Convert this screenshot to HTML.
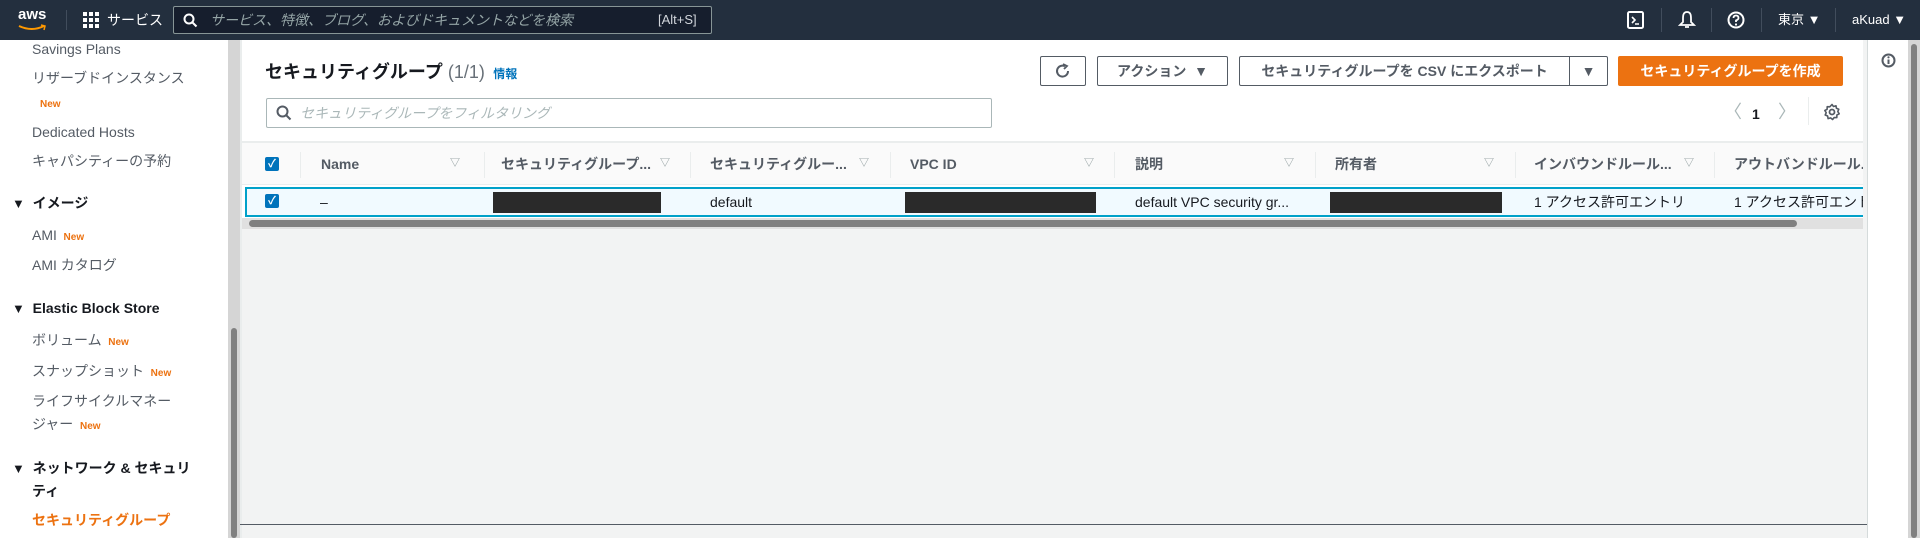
<!DOCTYPE html>
<html><head><meta charset="utf-8"><style>
*{box-sizing:border-box;margin:0;padding:0}
body{width:1920px;height:538px;overflow:hidden;background:#f2f3f3;font-family:"Liberation Sans","Noto Sans CJK JP",sans-serif;font-size:14px;line-height:18px;color:#16191f;position:relative}
.a{position:absolute;white-space:nowrap}
.top{left:0;top:0;width:1920px;height:40px;background:#232f3e}
.side{left:0;top:40px;width:228px;height:498px;background:#fff}
.sg{left:228px;top:40px;width:12px;height:498px;background:#d5d5d5}
.sth{left:231px;top:328px;width:6px;height:210px;background:#808080;border-radius:3px}
.si{color:#545b64;font-size:14px}
.new{color:#ec7211;font-size:10px;font-weight:bold}
.sh{color:#16191f;font-size:14px;font-weight:bold}
.tri{font-size:13px}
.panel{left:242px;top:40px;width:1621px;height:189px;background:#fff}
.btn{border:1px solid #545b64;background:#fff;height:30px;border-radius:2px;font-weight:bold;color:#545b64;font-size:14px;display:flex;align-items:center;justify-content:center}
.th{top:155px;font-weight:bold;color:#545b64;font-size:14px;height:18px;line-height:18px}
.ft{top:156px;color:#879596;font-size:10px;line-height:16px}
.sep{top:152px;width:1px;height:26px;background:#eaeded}
.td{top:193px;font-size:14px;color:#16191f;height:18px;line-height:18px}
.blk{top:192px;height:21px;background:#2a2a2a}
.cb{width:14px;height:14px;background:#0073bb;border-radius:2px;color:#fff;font-size:11px;line-height:14px;text-align:center;font-weight:bold}
</style></head><body>
<div class="a top"></div>
<div class="a" style="left:18px;top:6px;color:#fff;font-weight:bold;font-size:15px">aws</div>
<svg class="a" style="left:17px;top:24px" width="30" height="8"><path d="M2 2 Q15 8 27 2" stroke="#ff9900" stroke-width="2" fill="none"/><path d="M24 1 L28 2 L27 6" stroke="#ff9900" stroke-width="1.5" fill="none"/></svg>
<div class="a" style="left:66px;top:10px;width:1px;height:20px;background:#414d5c"></div>
<svg class="a" style="left:83px;top:12px" width="16" height="16" fill="#fff"><rect x="0" y="0" width="4" height="4"/><rect x="6" y="0" width="4" height="4"/><rect x="12" y="0" width="4" height="4"/><rect x="0" y="6" width="4" height="4"/><rect x="6" y="6" width="4" height="4"/><rect x="12" y="6" width="4" height="4"/><rect x="0" y="12" width="4" height="4"/><rect x="6" y="12" width="4" height="4"/><rect x="12" y="12" width="4" height="4"/></svg>
<div class="a" style="left:107px;top:11px;color:#fff;font-size:14px">サービス</div>
<div class="a" style="left:173px;top:6px;width:539px;height:28px;border:1px solid #879596;background:#161e2d;border-radius:2px"></div>
<svg class="a" style="left:183px;top:13px" width="15" height="15"><circle cx="6" cy="6" r="4.5" stroke="#fff" stroke-width="2" fill="none"/><path d="M9.5 9.5 L13.5 13.5" stroke="#fff" stroke-width="2"/></svg>
<div class="a" style="left:210px;top:11px;color:#95a5a6;font-size:14px;font-style:italic">サービス、特徴、ブログ、およびドキュメントなどを検索</div>
<div class="a" style="left:658px;top:11px;color:#d1d5db;font-size:13px">[Alt+S]</div>
<svg class="a" style="left:1627px;top:11px" width="17" height="18"><rect x="1" y="1" width="15" height="16" rx="1.5" stroke="#fff" stroke-width="2" fill="none"/><path d="M5 6 L8 9 L5 12 M8 13 H12" stroke="#fff" stroke-width="1.6" fill="none"/></svg>
<div class="a" style="left:1661px;top:8px;width:1px;height:24px;background:#414d5c"></div>
<svg class="a" style="left:1678px;top:10px" width="18" height="20"><path d="M9 2 C5 2 5 6 5 9 L5 12 L2 15 H16 L13 12 L13 9 C13 6 13 2 9 2 Z M7 17 H11" stroke="#fff" stroke-width="1.8" fill="none"/></svg>
<div class="a" style="left:1711px;top:8px;width:1px;height:24px;background:#414d5c"></div>
<svg class="a" style="left:1727px;top:11px" width="18" height="18"><circle cx="9" cy="9" r="7.5" stroke="#fff" stroke-width="2" fill="none"/><path d="M6.5 7 Q6.5 4.5 9 4.5 Q11.5 4.5 11.5 7 Q11.5 8.5 9 9.5 V11" stroke="#fff" stroke-width="1.8" fill="none"/><circle cx="9" cy="13.5" r="1.1" fill="#fff"/></svg>
<div class="a" style="left:1761px;top:8px;width:1px;height:24px;background:#414d5c"></div>
<div class="a" style="left:1778px;top:11px;color:#fff;font-size:13px">東京 ▼</div>
<div class="a" style="left:1835px;top:8px;width:1px;height:24px;background:#414d5c"></div>
<div class="a" style="left:1852px;top:11px;color:#fff;font-size:13px">aKuad ▼</div>

<div class="a side"></div>
<div class="a si" style="left:32px;top:40px">Savings Plans</div>
<div class="a si" style="left:32px;top:69px">リザーブドインスタンス</div>
<div class="a new" style="left:40px;top:96px">New</div>
<div class="a si" style="left:32px;top:123px">Dedicated Hosts</div>
<div class="a si" style="left:32px;top:152px">キャパシティーの予約</div>
<div class="a sh" style="left:12px;top:194px"><span class="tri">▼</span>&nbsp; イメージ</div>
<div class="a si" style="left:32px;top:226px">AMI <span class="new">&nbsp;New</span></div>
<div class="a si" style="left:32px;top:256px">AMI カタログ</div>
<div class="a sh" style="left:12px;top:299px"><span class="tri">▼</span>&nbsp; Elastic Block Store</div>
<div class="a si" style="left:32px;top:331px">ボリューム <span class="new">&nbsp;New</span></div>
<div class="a si" style="left:32px;top:362px">スナップショット <span class="new">&nbsp;New</span></div>
<div class="a si" style="left:32px;top:392px">ライフサイクルマネー</div>
<div class="a si" style="left:32px;top:415px">ジャー <span class="new">&nbsp;New</span></div>
<div class="a sh" style="left:12px;top:459px"><span class="tri">▼</span>&nbsp; ネットワーク &amp; セキュリ</div>
<div class="a sh" style="left:32px;top:482px">ティ</div>
<div class="a" style="left:32px;top:511px;color:#ec7211;font-weight:bold;font-size:14px">セキュリティグループ</div>
<div class="a sg"></div><div class="a sth"></div>

<div class="a panel"></div>
<div class="a" style="left:240px;top:40px;width:2px;height:498px;background:#eaeded"></div>
<div class="a" style="left:265px;top:60px;font-size:18px;line-height:24px;font-weight:bold">セキュリティグループ <span style="font-weight:normal;color:#687078">(1/1)</span> <span style="font-size:12px;color:#0073bb;font-weight:bold">&nbsp;情報</span></div>
<div class="a btn" style="left:1040px;top:56px;width:46px"><svg width="16" height="16"><path d="M13 8 A5.5 5.5 0 1 1 10 3.2" stroke="#545b64" stroke-width="2" fill="none"/><path d="M8 1 L12 3 L9 6" stroke="#545b64" stroke-width="1.8" fill="none"/></svg></div>
<div class="a btn" style="left:1097px;top:56px;width:131px">アクション &nbsp;▼</div>
<div class="a btn" style="left:1239px;top:56px;width:369px;justify-content:flex-start"><span style="width:330px;text-align:center">セキュリティグループを CSV にエクスポート</span><span style="width:1px;height:28px;background:#545b64"></span><span style="width:37px;text-align:center">▼</span></div>
<div class="a btn" style="left:1618px;top:56px;width:225px;background:#ec7211;border-color:#ec7211;color:#fff">セキュリティグループを作成</div>
<div class="a" style="left:266px;top:98px;width:726px;height:30px;border:1px solid #aab7b8;border-radius:2px;background:#fff"></div>
<svg class="a" style="left:276px;top:105px" width="16" height="16"><circle cx="6.5" cy="6.5" r="5" stroke="#545b64" stroke-width="2" fill="none"/><path d="M10 10 L14.5 14.5" stroke="#545b64" stroke-width="2"/></svg>
<div class="a" style="left:300px;top:104px;color:#aab7b8;font-style:italic">セキュリティグループをフィルタリング</div>
<div class="a" style="left:1724px;top:103px;color:#aab7b8;font-size:18px">〈</div>
<div class="a" style="left:1752px;top:105px;font-weight:bold">1</div>
<div class="a" style="left:1778px;top:103px;color:#aab7b8;font-size:18px">〉</div>
<div class="a" style="left:1808px;top:97px;width:1px;height:28px;background:#eaeded"></div>
<svg class="a" style="left:1823px;top:103px" width="18" height="18"><path d="M9 1.5 L10.5 3.5 L13 2.8 L13.4 5.3 L15.8 6.2 L14.8 8.6 L16.2 10.8 L13.9 12 L13.8 14.6 L11.2 14.5 L9.6 16.5 L7.6 14.9 L5.1 15.6 L4.6 13 L2.2 12 L3.2 9.7 L1.8 7.5 L4.1 6.3 L4.2 3.7 L6.8 3.8 Z" stroke="#545b64" stroke-width="1.6" fill="none" stroke-linejoin="round"/><circle cx="9" cy="9" r="2.5" stroke="#545b64" stroke-width="1.8" fill="none"/></svg>
<div class="a" style="left:242px;top:141px;width:1621px;height:2px;background:#eaeded"></div>
<div class="a" style="left:242px;top:143px;width:1621px;height:42px;background:#fafafa;border-bottom:1px solid #eaeded"></div>
<div class="a cb" style="left:265px;top:157px">✓</div>
<div class="a sep" style="left:300px"></div><div class="a sep" style="left:484px"></div><div class="a sep" style="left:690px"></div><div class="a sep" style="left:890px"></div><div class="a sep" style="left:1114px"></div><div class="a sep" style="left:1315px"></div><div class="a sep" style="left:1515px"></div><div class="a sep" style="left:1714px"></div>
<div class="a th" style="left:321px">Name</div>
<div class="a th" style="left:501px">セキュリティグループ...</div>
<div class="a th" style="left:710px">セキュリティグルー...</div>
<div class="a th" style="left:910px">VPC ID</div>
<div class="a th" style="left:1135px">説明</div>
<div class="a th" style="left:1335px">所有者</div>
<div class="a th" style="left:1534px">インバウンドルール...</div>
<div class="a th" style="left:1734px;width:129px;overflow:hidden">アウトバンドルール...</div>
<div class="a ft" style="left:450px">▽</div><div class="a ft" style="left:660px">▽</div><div class="a ft" style="left:859px">▽</div><div class="a ft" style="left:1084px">▽</div><div class="a ft" style="left:1284px">▽</div><div class="a ft" style="left:1484px">▽</div><div class="a ft" style="left:1684px">▽</div>
<div class="a" style="left:245px;top:187px;width:1618px;height:30px;background:#f1faff;border:2px solid #00a1c9;border-right:none"></div>
<div class="a cb" style="left:265px;top:194px">✓</div>
<div class="a td" style="left:320px">–</div>
<div class="a blk" style="left:493px;width:168px"></div>
<div class="a td" style="left:710px">default</div>
<div class="a blk" style="left:905px;width:191px"></div>
<div class="a td" style="left:1135px">default VPC security gr...</div>
<div class="a blk" style="left:1330px;width:172px"></div>
<div class="a td" style="left:1534px">1 アクセス許可エントリ</div>
<div class="a td" style="left:1734px;width:129px;overflow:hidden">1 アクセス許可エントリ</div>
<div class="a" style="left:242px;top:218px;width:1621px;height:11px;background:#e0e0e0"></div>
<div class="a" style="left:249px;top:220px;width:1548px;height:7px;background:#808080;border-radius:4px"></div>
<div class="a" style="left:240px;top:524px;width:1628px;height:1px;background:#545b64"></div>

<div class="a" style="left:1867px;top:40px;width:1px;height:498px;background:#d5dbdb"></div>
<div class="a" style="left:1868px;top:40px;width:40px;height:498px;background:#fff"></div>
<svg class="a" style="left:1881px;top:53px" width="15" height="15"><circle cx="7.5" cy="7.5" r="6" stroke="#545b64" stroke-width="2" fill="none"/><rect x="6.5" y="6.5" width="2" height="4.5" fill="#545b64"/><circle cx="7.5" cy="4.3" r="1.1" fill="#545b64"/></svg>
<div class="a" style="left:1908px;top:40px;width:12px;height:498px;background:#d5d5d5"></div>
<div class="a" style="left:1911px;top:44px;width:6px;height:494px;background:#808080;border-radius:3px"></div>
</body></html>
